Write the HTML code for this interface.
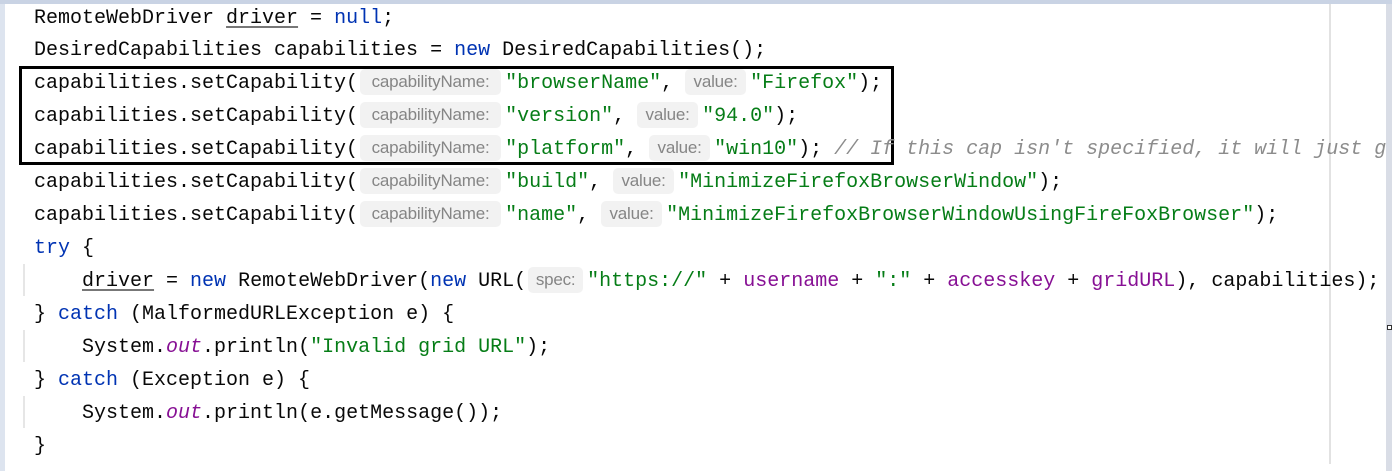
<!DOCTYPE html>
<html><head><meta charset="utf-8"><style>
body{margin:0;width:1392px;height:471px;overflow:hidden;background:#fff;position:relative;font-family:"Liberation Mono",monospace;}
.l{position:absolute;left:34px;height:33px;line-height:33px;font-size:20px;color:#080808;white-space:pre;}
.k{color:#0033b3}.s{color:#067d17}.p{color:#871094}.i{font-style:italic}.c{color:#8c8c8c;font-style:italic}
.u{text-decoration:underline;text-decoration-color:#777;text-underline-offset:3px}
.h{display:inline-block;height:26px;line-height:26px;vertical-align:1px;background:#f2f2f2;border-radius:5px;color:#858585;font-family:"Liberation Sans",sans-serif;font-size:17px;letter-spacing:-0.2px;text-align:center;margin:0 4px 0 2px}
.cn{width:141px}.v{width:61px;margin-left:0}.sp{width:55px}
</style></head><body>
<div style="position:absolute;left:0;top:0;width:5px;height:471px;background:#dde4ef"></div>
<div style="position:absolute;left:0;top:0;width:1392px;height:4px;background:#c9d3e4"></div>
<div style="position:absolute;left:1386px;top:4px;width:6px;height:467px;background:#d9dde6"></div>
<div style="position:absolute;left:1329px;top:4px;width:2px;height:460px;background:#e2e2e2"></div>
<div style="position:absolute;left:23px;top:264px;width:2px;height:32px;background:#e6e6e6"></div>
<div style="position:absolute;left:23px;top:330px;width:2px;height:32px;background:#e6e6e6"></div>
<div style="position:absolute;left:23px;top:396px;width:2px;height:32px;background:#e6e6e6"></div>
<div style="position:absolute;left:19px;top:66px;width:869px;height:93px;border:3px solid #000"></div>
<div class="l" style="top:2px">RemoteWebDriver <span class="u">driver</span> = <span class="k">null</span>;</div>
<div class="l" style="top:34px">DesiredCapabilities capabilities = <span class="k">new</span> DesiredCapabilities();</div>
<div class="l" style="top:67px">capabilities.setCapability(<span class="h cn">capabilityName:</span><span class="s">"browserName"</span>, <span class="h v">value:</span><span class="s">"Firefox"</span>);</div>
<div class="l" style="top:100px">capabilities.setCapability(<span class="h cn">capabilityName:</span><span class="s">"version"</span>, <span class="h v">value:</span><span class="s">"94.0"</span>);</div>
<div class="l" style="top:133px">capabilities.setCapability(<span class="h cn">capabilityName:</span><span class="s">"platform"</span>, <span class="h v">value:</span><span class="s">"win10"</span>); <span class="c">// If this cap isn't specified, it will just g</span></div>
<div class="l" style="top:166px">capabilities.setCapability(<span class="h cn">capabilityName:</span><span class="s">"build"</span>, <span class="h v">value:</span><span class="s">"MinimizeFirefoxBrowserWindow"</span>);</div>
<div class="l" style="top:199px">capabilities.setCapability(<span class="h cn">capabilityName:</span><span class="s">"name"</span>, <span class="h v">value:</span><span class="s">"MinimizeFirefoxBrowserWindowUsingFireFoxBrowser"</span>);</div>
<div class="l" style="top:232px"><span class="k">try</span> {</div>
<div class="l" style="top:265px">    <span class="u">driver</span> = <span class="k">new</span> RemoteWebDriver(<span class="k">new</span> URL(<span class="h sp">spec:</span><span class="s">"https://"</span> + <span class="p">username</span> + <span class="s">":"</span> + <span class="p">accesskey</span> + <span class="p">gridURL</span>), capabilities);</div>
<div class="l" style="top:298px">} <span class="k">catch</span> (MalformedURLException e) {</div>
<div class="l" style="top:331px">    System.<span class="p i">out</span>.println(<span class="s">"Invalid grid URL"</span>);</div>
<div class="l" style="top:364px">} <span class="k">catch</span> (Exception e) {</div>
<div class="l" style="top:397px">    System.<span class="p i">out</span>.println(e.getMessage());</div>
<div class="l" style="top:430px">}</div>
<div style="position:absolute;left:1387px;top:325px;width:3px;height:3px;border:1px solid #333;background:#fff"></div>
</body></html>
